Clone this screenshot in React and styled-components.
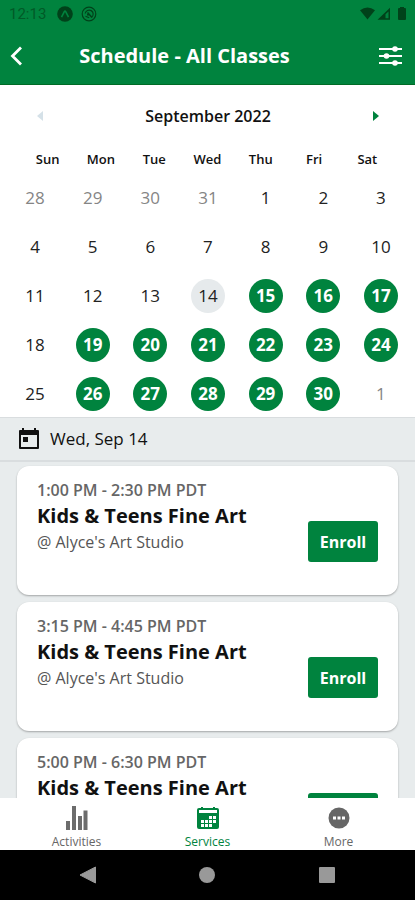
import styled, { createGlobalStyle } from "styled-components";

const weekDays = ["Sun", "Mon", "Tue", "Wed", "Thu", "Fri", "Sat"];

const days = [
  ...[28, 29, 30, 31].map((n) => ({ n, state: "outside" })),
  ...Array.from({ length: 13 }, (_, i) => ({ n: i + 1, state: "plain" })),
  { n: 14, state: "today" },
  { n: 15, state: "open" },
  { n: 16, state: "open" },
  { n: 17, state: "open" },
  { n: 18, state: "plain" },
  ...[19, 20, 21, 22, 23, 24].map((n) => ({ n, state: "open" })),
  { n: 25, state: "plain" },
  ...[26, 27, 28, 29, 30].map((n) => ({ n, state: "open" })),
  { n: 1, state: "outside" },
];

const classes = [
  { time: "1:00 PM - 2:30 PM PDT", name: "Kids & Teens Fine Art", place: "@ Alyce's Art Studio" },
  { time: "3:15 PM - 4:45 PM PDT", name: "Kids & Teens Fine Art", place: "@ Alyce's Art Studio" },
  { time: "5:00 PM - 6:30 PM PDT", name: "Kids & Teens Fine Art", place: "@ Alyce's Art Studio" },
];

function App() {
  return (
    <Screen>
      <GlobalStyle />
      <Header>
        <StatusBar>
          <Clock>12:13</Clock>
          <svg width="16" height="16" viewBox="0 0 16 16">
            <circle cx="8" cy="8" r="7.8" fill="#00421a" />
            <path d="M4.5 11.2 7.3 5.6q.7-1 1.4 0l2.8 5.6" fill="none" stroke="#00833e" strokeWidth="1.6" />
          </svg>
          <svg width="16" height="16" viewBox="0 0 16 16" fill="none" stroke="#00421a">
            <circle cx="8" cy="8" r="6.8" strokeWidth="1.2" />
            <path d="M4.2 7.5A4 4 0 1 1 10.5 11.3M4.5 10.2 8.2 11.8" strokeWidth="1.2" />
            <path d="M6.5 6.5 11 11.5M6 8.8h2.5" strokeWidth="1.6" />
          </svg>
          <Spacer />
          <svg width="47" height="14" viewBox="0 0 47 14" fill="#00421a">
            <path d="M0 3.2Q7.5-2.2 15 3.2L7.5 12.5Z" />
            <path d="M17.5 12.8 30 .8v12Zm8-1.5h3V4.4l-3 2.9Z" fillRule="evenodd" />
            <path d="M40 1V0h4v1h1q1 0 1 1v10q0 1-1 1h-6q-1 0-1-1V2q0-1 1-1Z" />
          </svg>
        </StatusBar>
        <TitleBar>
          <IconButton aria-label="Back">
            <svg width="14" height="20" viewBox="0 0 14 20">
              <path d="M11 1.5 2.5 10l8.5 8.5" fill="none" stroke="#fff" strokeWidth="2.8" />
            </svg>
          </IconButton>
          <Title>Schedule - All Classes</Title>
          <IconButton aria-label="Filters">
            <svg width="24" height="20" viewBox="0 0 24 20" fill="#fff">
              <path d="M0 2h23v2H0zM0 9h23v2H0zM0 16h23v2H0z" />
              <circle cx="16" cy="3" r="2.8" />
              <circle cx="7.5" cy="10" r="2.8" />
              <circle cx="16" cy="17" r="2.8" />
            </svg>
          </IconButton>
        </TitleBar>
      </Header>

      <Calendar>
        <MonthRow>
          <ArrowButton aria-label="Previous month" disabled>
            <svg width="6" height="10" viewBox="0 0 6 10">
              <path d="M6 0v10L0 5z" fill="#d5e1e8" />
            </svg>
          </ArrowButton>
          <Month>September 2022</Month>
          <ArrowButton aria-label="Next month">
            <svg width="6" height="10" viewBox="0 0 6 10">
              <path d="M0 0v10l6-5z" fill="#00833e" />
            </svg>
          </ArrowButton>
        </MonthRow>
        <WeekRow>
          {weekDays.map((day) => (
            <WeekDay key={day}>{day}</WeekDay>
          ))}
        </WeekRow>
        <DayGrid>
          {days.map((day, i) => (
            <Day key={i} $state={day.state}>
              {day.n}
            </Day>
          ))}
        </DayGrid>
      </Calendar>

      <DateBar>
        <svg width="22" height="22" viewBox="0 0 22 22">
          <path d="M1 3q0-1 1-1h2V0h2v2h10V0h2v2h2q1 0 1 1v17q0 1-1 1H2q-1 0-1-1Zm2 4v12h16V7Z" fill="#111" fillRule="evenodd" />
          <path d="M5 9h5v5H5z" fill="#111" />
        </svg>
        Wed, Sep 14
      </DateBar>

      <ClassList>
        {classes.map((item) => (
          <Card key={item.time}>
            <Details>
              <Time>{item.time}</Time>
              <ClassName>{item.name}</ClassName>
              <Place>{item.place}</Place>
            </Details>
            <Enroll>Enroll</Enroll>
          </Card>
        ))}
      </ClassList>

      <TabBar>
        <Tab href="#activities">
          <svg width="24" height="24" viewBox="0 0 24 24" fill="#6c6c6c">
            <path d="M1 15h4v9H1zM7 0h4v24H7zM13 10h4v14h-4zM18.5 4.5h4V24h-4z" />
          </svg>
          Activities
        </Tab>
        <Tab href="#services" $active>
          <svg width="24" height="24" viewBox="0 0 24 24" fill="#00833e">
            <path d="M3 2h2V1h2v1h10V1h2v1h2q2 0 2 2v17q0 2-2 2H3q-2 0-2-2V4q0-2 2-2Zm0 2v3h18V4Z" fillRule="evenodd" />
            <path
              d="M13 10h3v3h-3zM17 10h3v3h-3zM5 14h3v3H5zM9 14h3v3H9zM13 14h3v3h-3zM17 14h3v3h-3zM5 18h3v3H5zM9 18h3v3H9zM13 18h3v3h-3z"
              fill="#fff"
            />
          </svg>
          Services
        </Tab>
        <Tab href="#more">
          <svg width="24" height="24" viewBox="0 0 24 24">
            <circle cx="12" cy="12" r="10.5" fill="#666" />
            <path d="M6 10.5h3v3H6zM10.5 10.5h3v3h-3zM15 10.5h3v3h-3z" fill="#fff" />
          </svg>
          More
        </Tab>
      </TabBar>

      <SystemBar>
        <SystemButton aria-label="System back">
          <svg width="18" height="18" viewBox="0 0 18 18">
            <path d="M16.5 1v16L1 9Z" fill="#999" stroke="#999" strokeLinejoin="round" />
          </svg>
        </SystemButton>
        <SystemButton aria-label="Home">
          <svg width="18" height="18" viewBox="0 0 18 18">
            <circle cx="9" cy="9" r="8" fill="#999" />
          </svg>
        </SystemButton>
        <SystemButton aria-label="Recent apps">
          <svg width="18" height="18" viewBox="0 0 18 18">
            <rect x="1" y="1" width="16" height="16" rx="1" fill="#999" />
          </svg>
        </SystemButton>
      </SystemBar>
    </Screen>
  );
}

export default App;

const GlobalStyle = createGlobalStyle`
  * {
    box-sizing: border-box;
  }

  body {
    margin: 0;
    font-family: "Open Sans", "Noto Sans", sans-serif;
    color: #111;
  }

  button {
    font-family: inherit;
    border: none;
    padding: 0;
    background: none;
    cursor: pointer;
  }

  svg {
    display: block;
    flex-shrink: 0;
  }
`;

const Screen = styled.div`
  display: flex;
  flex-direction: column;
  height: 100vh;
  background-color: #e8eced;
`;

const Header = styled.header`
  background-color: #00833e;
  border-bottom: 1px solid #006b26;
`;

const StatusBar = styled.div`
  display: flex;
  align-items: center;
  gap: 8px;
  height: 28px;
  padding: 0 8px 0 9px;
`;

const Clock = styled.span`
  width: 40px;
  font-family: Roboto, sans-serif;
  font-size: 15px;
  line-height: 20px;
  color: #005a27;
`;

const Spacer = styled.div`
  flex: 1;
`;

const TitleBar = styled.div`
  display: flex;
  align-items: center;
  height: 56px;
  padding: 0 12px 0 10px;
`;

const IconButton = styled.button`
  display: flex;
`;

const Title = styled.h1`
  flex: 1;
  margin: 0 34px 0 0;
  font-size: 20px;
  font-weight: 700;
  line-height: 28px;
  text-align: center;
  color: #fff;
`;

const Calendar = styled.section`
  padding-bottom: 6px;
  background-color: #fff;
`;

const MonthRow = styled.div`
  display: flex;
  align-items: center;
  justify-content: space-between;
  height: 62px;
  padding: 0 36px 0 37px;
`;

const ArrowButton = styled.button`
  display: flex;
`;

const Month = styled.h2`
  margin: 0;
  font-size: 16px;
  font-weight: 600;
  line-height: 24px;
`;

const WeekRow = styled.div`
  display: grid;
  grid-template-columns: repeat(7, 1fr);
  padding: 2px 21px 12px;
`;

const WeekDay = styled.div`
  font-size: 13px;
  font-weight: 600;
  line-height: 20px;
  text-align: center;
`;

const DayGrid = styled.div`
  display: grid;
  grid-template-columns: repeat(7, 34px);
  justify-content: space-between;
  row-gap: 15px;
  padding: 0 17px 0 18px;
`;

const dayColors = {
  outside: "#858585",
  plain: "#222",
  today: "#222",
  open: "#fff",
};

const dayBackgrounds = {
  today: "#e6eaec",
  open: "#00833e",
};

const Day = styled.button`
  height: 34px;
  border-radius: 50%;
  font-size: 17px;
  line-height: 24px;
  font-weight: ${(props) => (props.$state === "open" ? 700 : 400)};
  color: ${(props) => dayColors[props.$state]};
  background-color: ${(props) => dayBackgrounds[props.$state] || "transparent"};
`;

const DateBar = styled.div`
  display: flex;
  align-items: center;
  gap: 10px;
  height: 45px;
  padding: 0 18px;
  border-top: 1px solid #d9dddf;
  border-bottom: 2px solid #d9dddf;
  font-size: 17px;
  font-weight: 500;
  line-height: 24px;
`;

const ClassList = styled.main`
  display: flex;
  flex-direction: column;
  gap: 7px;
  flex: 1;
  min-height: 0;
  padding: 4px 17px;
  overflow-y: auto;
  scrollbar-width: none;
`;

const Card = styled.article`
  display: flex;
  align-items: flex-start;
  justify-content: space-between;
  flex-shrink: 0;
  min-height: 129px;
  padding: 12px 20px;
  background-color: #fff;
  border-radius: 12px;
  box-shadow: 0 1px 2px rgba(0, 0, 0, 0.3);
`;

const Details = styled.div`
  display: flex;
  flex-direction: column;
`;

const Time = styled.div`
  font-size: 16px;
  font-weight: 600;
  line-height: 24px;
  color: #666;
`;

const ClassName = styled.h3`
  margin: 0;
  font-size: 20px;
  font-weight: 700;
  line-height: 28px;
`;

const Place = styled.div`
  font-size: 16px;
  line-height: 24px;
  color: #555;
`;

const Enroll = styled.button`
  align-self: center;
  width: 70px;
  height: 41px;
  margin-top: 22px;
  font-size: 16px;
  font-weight: 700;
  color: #fff;
  background-color: #00833e;
  border-radius: 3px;
`;

const TabBar = styled.nav`
  display: flex;
  justify-content: space-around;
  height: 52px;
  padding: 8px 11px 0;
  background-color: #fff;
`;

const Tab = styled.a`
  display: flex;
  flex-direction: column;
  align-items: center;
  flex: 1;
  font-size: 12px;
  font-weight: 500;
  line-height: 24px;
  text-decoration: none;
  color: ${(props) => (props.$active ? "#00833e" : "#666")};
`;

const SystemBar = styled.div`
  display: flex;
  align-items: center;
  justify-content: space-around;
  height: 50px;
  padding: 0 28px;
  background-color: #000;
`;

const SystemButton = styled.button`
  display: flex;
`;
